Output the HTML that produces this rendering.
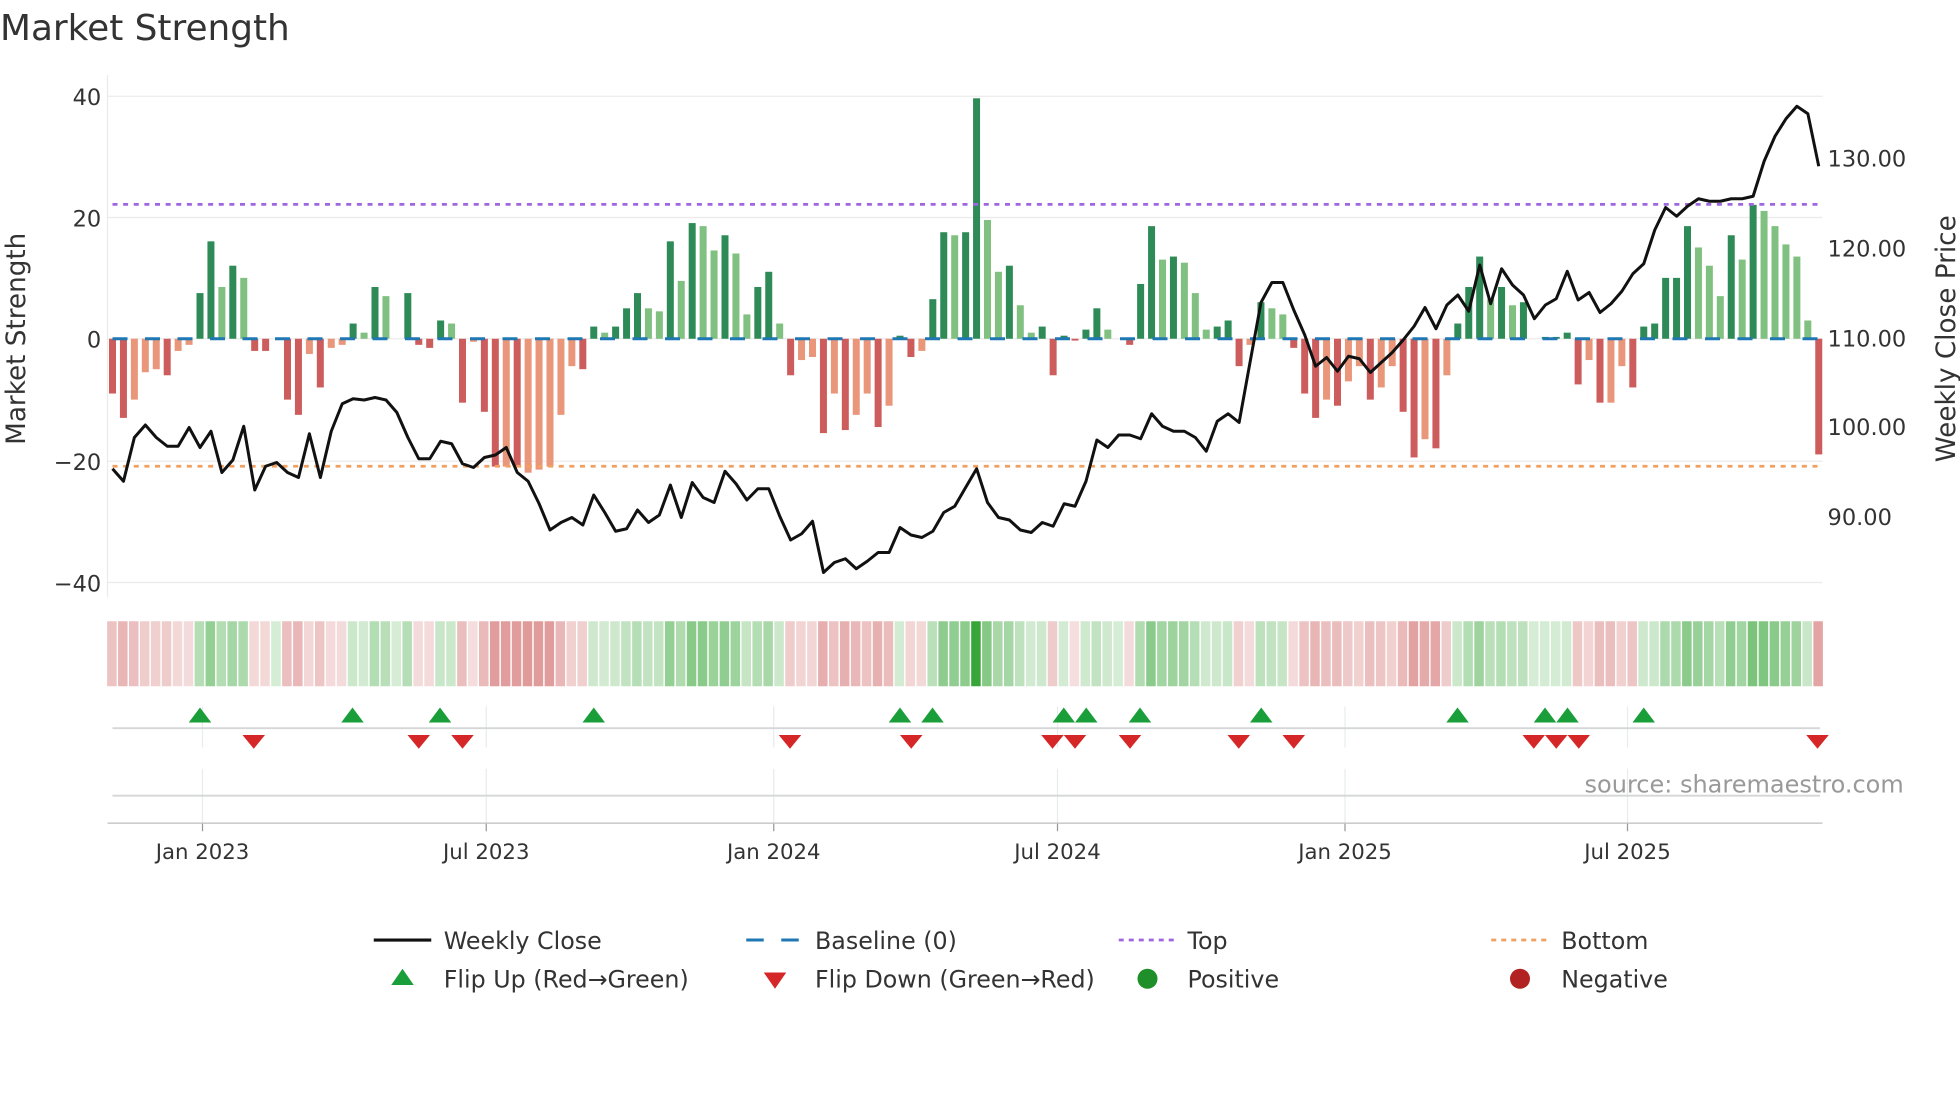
<!DOCTYPE html>
<html><head><meta charset="utf-8"><style>
html,body{margin:0;padding:0;background:#fff;width:1960px;height:1102px;overflow:hidden}
svg{display:block}
text{font-family:"DejaVu Sans","Liberation Sans",sans-serif;fill:#333}
</style></head><body>
<svg id="s" width="1960" height="1102" viewBox="0 0 1568 881.6" xmlns="http://www.w3.org/2000/svg">
<text x="0" y="32" font-size="28.7">Market Strength</text>
<g stroke="#ebebeb" stroke-width="1">
<line x1="86" y1="77" x2="1458" y2="77"/><line x1="86" y1="174" x2="1458" y2="174"/>
<line x1="86" y1="271" x2="1458" y2="271"/><line x1="86" y1="369" x2="1458" y2="369"/>
<line x1="86" y1="466" x2="1458" y2="466"/><line x1="86" y1="60" x2="86" y2="478"/>
</g>
<g font-size="18" text-anchor="end">
<text x="81" y="84">40</text><text x="81" y="181">20</text><text x="81" y="278">0</text>
<text x="81" y="376">−20</text><text x="81" y="473">−40</text></g>
<g font-size="18"><text x="1462" y="133">130.00</text><text x="1462" y="205">120.00</text>
<text x="1462" y="277">110.00</text><text x="1462" y="348">100.00</text><text x="1462" y="420">90.00</text></g>
<text font-size="21" text-anchor="middle" transform="translate(20,271) rotate(-90)">Market Strength</text>
<text font-size="21" text-anchor="middle" transform="translate(1564,271) rotate(-90)">Weekly Close Price</text>
<g id="bars"></g>
<line x1="90" y1="271" x2="1456" y2="271" stroke="#1f77b4" stroke-width="2.4" stroke-dasharray="12 14"/>
<line x1="90" y1="163.5" x2="1456" y2="163.5" stroke="#a066e0" stroke-width="2.2" stroke-dasharray="4 4.5"/>
<line x1="90" y1="373" x2="1456" y2="373" stroke="#f0a060" stroke-width="2.2" stroke-dasharray="4 4.5"/>
<polyline id="price" fill="none" stroke="#111" stroke-width="2.4" stroke-linejoin="round"/>
<g id="rib"></g>
<g stroke="#e8ecee" stroke-width="1">
<line x1="162" y1="565" x2="162" y2="598"/><line x1="389" y1="565" x2="389" y2="598"/><line x1="619" y1="565" x2="619" y2="598"/><line x1="846" y1="565" x2="846" y2="598"/><line x1="1076" y1="565" x2="1076" y2="598"/><line x1="1302" y1="565" x2="1302" y2="598"/>
<line x1="162" y1="615" x2="162" y2="658"/><line x1="389" y1="615" x2="389" y2="658"/><line x1="619" y1="615" x2="619" y2="658"/><line x1="846" y1="615" x2="846" y2="658"/><line x1="1076" y1="615" x2="1076" y2="658"/><line x1="1302" y1="615" x2="1302" y2="658"/>
</g>
<line x1="90" y1="582.5" x2="1456" y2="582.5" stroke="#d4d6d8" stroke-width="1.5"/>
<line x1="90" y1="636.5" x2="1456" y2="636.5" stroke="#d4d6d8" stroke-width="1.5"/>
<line x1="86" y1="658.5" x2="1458" y2="658.5" stroke="#cccccc" stroke-width="1.3"/>
<g stroke="#999" stroke-width="1"><line x1="162" y1="659" x2="162" y2="665"/><line x1="389" y1="659" x2="389" y2="665"/><line x1="619" y1="659" x2="619" y2="665"/><line x1="846" y1="659" x2="846" y2="665"/><line x1="1076" y1="659" x2="1076" y2="665"/><line x1="1302" y1="659" x2="1302" y2="665"/></g>
<g id="tri"></g>
<text x="1523" y="634" font-size="19.2" text-anchor="end" style="fill:#999">source: sharemaestro.com</text>
<g font-size="17" text-anchor="middle"><text x="162" y="687">Jan 2023</text><text x="389" y="687">Jul 2023</text><text x="619" y="687">Jan 2024</text><text x="846" y="687">Jul 2024</text><text x="1076" y="687">Jan 2025</text><text x="1302" y="687">Jul 2025</text></g>
<g font-size="19">
<line x1="299" y1="752" x2="345" y2="752" stroke="#111" stroke-width="2.5"/><text x="355" y="759">Weekly Close</text>
<line x1="597" y1="752" x2="641" y2="752" stroke="#1f77b4" stroke-width="2.4" stroke-dasharray="14 14"/><text x="652" y="759">Baseline (0)</text>
<line x1="895" y1="752" x2="939" y2="752" stroke="#a066e0" stroke-width="2.2" stroke-dasharray="4 4"/><text x="950" y="759">Top</text>
<line x1="1193" y1="752" x2="1237" y2="752" stroke="#f0a060" stroke-width="2.2" stroke-dasharray="4 4"/><text x="1249" y="759">Bottom</text>
<polygon points="313,788 331,788 322,775" fill="#1a9e3a"/><text x="355" y="790">Flip Up (Red→Green)</text>
<polygon points="611,778 629,778 620,791" fill="#d62728"/><text x="652" y="790">Flip Down (Green→Red)</text>
<circle cx="918" cy="783" r="8" fill="#1f8f2a"/><text x="950" y="790">Positive</text>
<circle cx="1216" cy="783" r="8" fill="#b22222"/><text x="1249" y="790">Negative</text>
</g>
</svg>
<script>
var V=[[-9,1],[-13,1],[-10,0],[-5.5,0],[-5,0],[-6,1],[-2,0],[-1,0],[7.5,1],[16,1],[8.5,0],[12,1],[10,0],[-2,1],[-2,1],[0,0],[-10,1],[-12.5,1],[-2.5,0],[-8,1],[-1.5,0],[-1,0],[2.5,1],[1,0],[8.5,1],[7,0],[0,0],[7.5,1],[-1,1],[-1.5,1],[3,1],[2.5,0],[-10.5,1],[-0.5,0],[-12,1],[-21,1],[-21,0],[-21,1],[-22,0],[-21.5,0],[-21,0],[-12.5,0],[-4.5,0],[-5,1],[2,1],[1,0],[2,1],[5,1],[7.5,1],[5,0],[4.5,0],[16,1],[9.5,0],[19,1],[18.5,0],[14.5,0],[17,1],[14,0],[4,0],[8.5,1],[11,1],[2.5,0],[-6,1],[-3.5,0],[-3,0],[-15.5,1],[-9,0],[-15,1],[-12.5,0],[-9,0],[-14.5,1],[-11,0],[0.5,1],[-3,1],[-2,0],[6.5,1],[17.5,1],[17,0],[17.5,1],[39.5,1],[19.5,0],[11,0],[12,1],[5.5,0],[1,0],[2,1],[-6,1],[0.5,1],[-0.3,1],[1.5,1],[5,1],[1.5,0],[0,0],[-1,1],[9,1],[18.5,1],[13,0],[13.5,1],[12.5,0],[7.5,0],[1.5,0],[2,1],[3,1],[-4.5,1],[-1,0],[6,1],[5,0],[4,0],[-1.5,1],[-9,1],[-13,1],[-10,0],[-11,1],[-7,0],[-4.5,0],[-10,1],[-8,0],[-4.5,0],[-12,1],[-19.5,1],[-16.5,0],[-18,1],[-6,0],[2.5,1],[8.5,1],[13.5,1],[6.5,0],[8.5,1],[5.5,0],[6,1],[0,0],[0.3,1],[0.3,1],[1,1],[-7.5,1],[-3.5,0],[-10.5,1],[-10.5,0],[-4.5,0],[-8,1],[2,1],[2.5,1],[10,1],[10,1],[18.5,1],[15,0],[12,0],[7,0],[17,1],[13,0],[22,1],[21,0],[18.5,0],[15.5,0],[13.5,0],[3,0],[-19,1]];
var P=[375,385,350,340,350,357,357,342,358,345,378,368,341,392,373,370,378,382,347,382,345,323,319,320,318,320,330,350,367,367,353,355,371,374,366,364,358,378,385,403,424,418,414,420,396,410,425,423,408,418,412,388,414,386,398,402,377,387,400,391,391,413,432,427,417,458,450,447,455,449,442,442,422,428,430,425,410,405,390,375,402,414,416,424,426,418,421,403,405,385,352,358,348,348,351,331,341,345,345,350,361,337,331,338,290,242,226,226,248,268,293,286,297,285,287,298,290,282,272,261,246,263,244,236,249,212,243,215,228,236,255,244,239,217,240,234,250,243,233,219,211,184,166,173,165,159,161,161,159,159,157,129,109,95,85,91,133];
var NS="http://www.w3.org/2000/svg";
function el(t,a,p){var e=document.createElementNS(NS,t);for(var k in a)e.setAttribute(k,a[k]);p.appendChild(e);return e;}
var bars=document.getElementById('bars'),rib=document.getElementById('rib'),tri=document.getElementById('tri');
var pts=[];
for(var i=0;i<V.length;i++){
 var x=90+i*8.75,v=V[i][0],d=V[i][1];
 var h=Math.abs(v)*4.87,y=v>=0?271-h:271;
 var c=v>=0?(d?'#2e8b57':'#80c080'):(d?'#cd5c5c':'#e9967a');
 if(h>0.3)el('rect',{x:x-2.8,y:y,width:5.6,height:h,fill:c},bars);
 var a=Math.abs(v)>35?0.95:0.2+0.42*Math.min(Math.abs(v),22)/22;
 var rc=v>=0?'rgba(44,160,44,'+a+')':'rgba(205,92,92,'+a+')';
 el('rect',{x:x-4.3,y:497,width:7.6,height:52,fill:rc},rib);
 pts.push(x.toFixed(1)+','+P[i]);
}
document.getElementById('price').setAttribute('points',pts.join(' '));
[160,282,352,475,720,746,851,869,912,1009,1166,1236,1254,1315].forEach(function(x){el('polygon',{points:(x-9)+',578 '+(x+9)+',578 '+x+',566',fill:'#1a9e3a'},tri);});
[203,335,370,632,729,842,860,904,991,1035,1227,1245,1263,1454].forEach(function(x){el('polygon',{points:(x-9)+',588 '+(x+9)+',588 '+x+',599',fill:'#d62728'},tri);});
</script>
</body></html>
